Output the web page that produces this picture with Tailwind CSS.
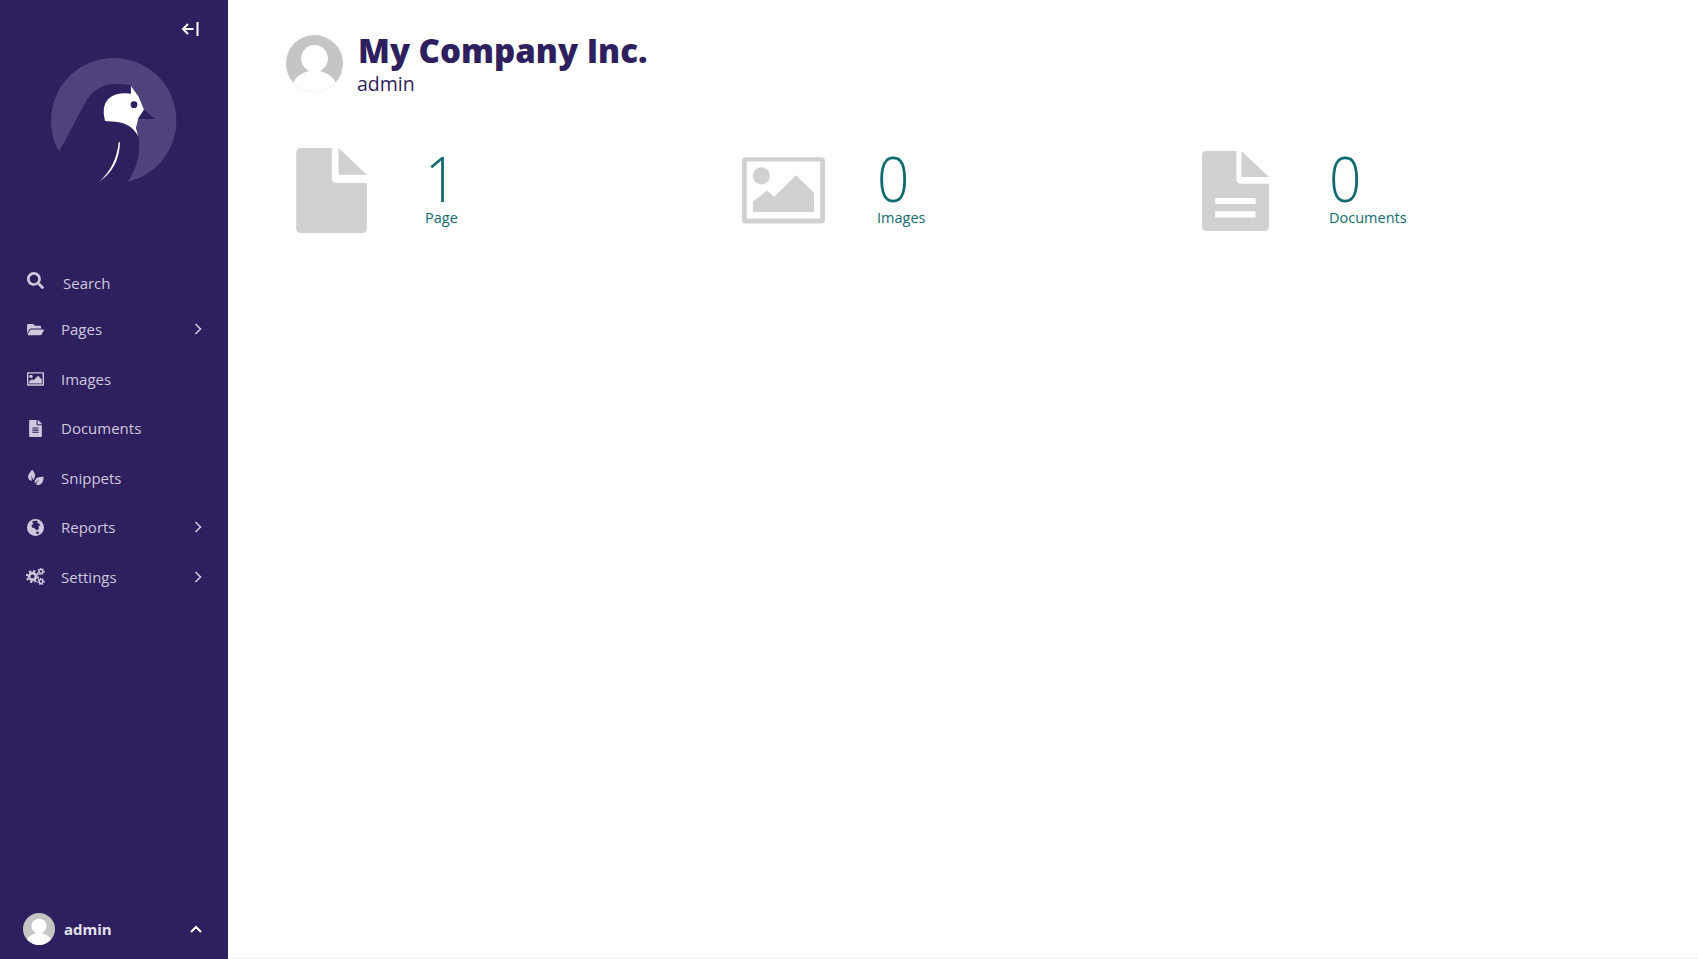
<!DOCTYPE html>
<html lang="en">
<head>
  <meta charset="UTF-8">
  <title>Dashboard</title>
  <script src="https://cdn.jsdelivr.net/npm/@tailwindcss/browser@4"></script>
</head>
<body class="bg-white font-['Open_Sans',sans-serif] h-[959px] overflow-hidden">
  <div class="flex h-[959px]">
    <!-- Sidebar -->
    <aside class="w-[228px] shrink-0 bg-[#2e1f5e] flex flex-col text-[#cdc8de]">
      <div class="flex justify-end pt-[21px] pr-[29px] h-[57px]">
        <svg class="w-[18px] h-[16px]" viewBox="0 0 18 16" fill="none" stroke="white" stroke-width="2"><path d="M16.5 1v14"/><path d="M12.5 8H2M7 3 2 8l5 5"/></svg>
      </div>
      <div class="pl-[50px]">
        <svg class="w-[128px] h-[128px]" viewBox="150 172 384 384">
          <circle cx="341" cy="363" r="188" fill="#50437d"/>
          <path d="M178 455 255 310Q285 255 345 252L390 255 395 300 415 410Q428 480 383 547L350 560H250L178 470Z" fill="#2e1f5e"/>
          <path d="M393 260 415 290 432 330 415 355 408 385 415 410Q392 368 345 366L315 364Q303 320 325 297 350 277 393 282Z" fill="#fff"/>
          <circle cx="402" cy="315" r="10" fill="#2e1f5e"/>
          <path d="M432 330 465 358H415Z" fill="#2e1f5e"/>
          <path d="M356 428 360 428Q358 505 298 546 349 500 356 428Z" fill="#fff"/>
        </svg>
      </div>
      <nav class="mt-[76.5px] flex flex-col">
        <a class="flex items-center h-[43px] pl-[27px] pr-[26px] text-[15px]">
          <svg class="w-[17px] h-[17px] -mt-[6px]" viewBox="0 0 512 512" fill="currentColor"><path d="M505 442.7L405.3 343c-4.5-4.5-10.6-7-17-7H372c27.6-35.3 44-79.7 44-128C416 93.1 322.9 0 208 0S0 93.1 0 208s93.1 208 208 208c48.3 0 92.7-16.4 128-44v16.3c0 6.4 2.5 12.5 7 17l99.7 99.7c9.4 9.4 24.6 9.4 33.9 0l28.3-28.3c9.4-9.4 9.4-24.6.1-34zM208 336c-70.7 0-128-57.2-128-128 0-70.7 57.2-128 128-128 70.7 0 128 57.2 128 128 0 70.7-57.2 128-128 128z"/></svg>
          <span class="ml-[19px]">Search</span>
        </a>
        <a class="flex items-center h-[49.5px] pl-[27px] pr-[26px] text-[15px]">
          <svg class="w-[17px] h-[15px]" viewBox="0 0 576 512" fill="currentColor"><path d="M572.694 292.093L500.27 416.248A63.997 63.997 0 0 1 444.989 448H45.025c-18.523 0-30.064-20.093-20.731-36.093l72.424-124.155A64 64 0 0 1 152 256h399.964c18.523 0 30.064 20.093 20.73 36.093zM152 224h328v-48c0-26.51-21.49-48-48-48H272l-64-64H48C21.49 64 0 85.49 0 112v278.046l69.077-118.418C86.214 242.25 117.989 224 152 224z"/></svg>
          <span class="ml-[17px]">Pages</span>
          <svg class="ml-auto w-[8px] h-[12px]" viewBox="0 0 8 12" fill="none" stroke="currentColor" stroke-width="1.6"><path d="M1.5 1l5 5-5 5"/></svg>
        </a>
        <a class="flex items-center h-[49.5px] pl-[27px] pr-[26px] text-[15px]">
          <svg class="w-[17px] h-[14px]" viewBox="38 55 244 196" fill="currentColor"><path fill-rule="evenodd" d="M48 55H272Q282 55 282 65V240Q282 250 272 250H48Q38 250 38 240V65Q38 55 48 55ZM58 75V230H262V75Z"/><circle cx="95" cy="115" r="24"/><path d="M70 216V185L112 153 132 172 197 108 250 160V216Z"/></svg>
          <span class="ml-[17px]">Images</span>
        </a>
        <a class="flex items-center h-[49.5px] pl-[27px] pr-[26px] text-[15px]">
          <svg class="w-[17px] h-[17px]" viewBox="0 0 384 512" fill="currentColor"><path d="M224 136V0H24C10.7 0 0 10.7 0 24v464c0 13.3 10.7 24 24 24h336c13.3 0 24-10.7 24-24V160H248c-13.2 0-24-10.8-24-24zm64 236c0 6.6-5.4 12-12 12H108c-6.6 0-12-5.4-12-12v-8c0-6.6 5.4-12 12-12h168c6.6 0 12 5.4 12 12v8zm0-64c0 6.6-5.4 12-12 12H108c-6.6 0-12-5.4-12-12v-8c0-6.6 5.4-12 12-12h168c6.6 0 12 5.4 12 12v8zm0-72v8c0 6.6-5.4 12-12 12H108c-6.6 0-12-5.4-12-12v-8c0-6.6 5.4-12 12-12h168c6.6 0 12 5.4 12 12zm96-114.1v6.1H256V0h6.1c6.4 0 12.5 2.5 17 7l97.9 98c4.5 4.5 7 10.6 7 16.9z"/></svg>
          <span class="ml-[17px]">Documents</span>
        </a>
        <a class="flex items-center h-[49.5px] pl-[27px] pr-[26px] text-[15px]">
          <svg class="w-[17px] h-[17px]" viewBox="0 0 17 16" fill="currentColor"><path d="M5 0C7.5 2.5 8.5 5 7.8 7.5 7.4 9 6.8 10 6 10.6 5.5 8.5 5 7 4.4 5.5 4.5 7.5 4.8 9.5 4.8 11.2 2.6 11.2.8 9.5 1 7 1.2 4.5 3.6 2.7 5 0Z"/><path d="M16.5 7C16.8 10.5 15.5 15 11.5 15.5 10.5 15.6 9.6 15.3 9 14.8 9.8 13 10.8 11.7 12.3 10.3 10.5 11.2 9 12.6 8 14 7 11.5 8.8 8.2 12 7.7 13.8 7.4 15.3 7.5 16.5 7Z"/></svg>
          <span class="ml-[17px]">Snippets</span>
        </a>
        <a class="flex items-center h-[49.5px] pl-[27px] pr-[26px] text-[15px]">
          <svg class="w-[17px] h-[17px]" viewBox="0 0 17 17"><circle cx="8.5" cy="8.5" r="8.5" fill="currentColor"/><path d="M5 2.5 8 1.7 11 2 10 4 12 4.5 13.5 6.5 11.5 7 12 9.5 9.5 11.5 7.5 9 5 8.5 4.5 6 6.5 5 5 2.5ZM9 13 11.5 12.5 12 14.5 9.5 15Z" fill="#2e1f5e"/></svg>
          <span class="ml-[17px]">Reports</span>
          <svg class="ml-auto w-[8px] h-[12px]" viewBox="0 0 8 12" fill="none" stroke="currentColor" stroke-width="1.6"><path d="M1.5 1l5 5-5 5"/></svg>
        </a>
        <a class="flex items-center h-[49.5px] pl-[26px] pr-[26px] text-[15px]">
          <svg class="w-[19px] h-[17px]" viewBox="0 0 19 17" fill="none" stroke="currentColor"><circle cx="6.5" cy="8.5" r="3.4" stroke-width="2.6"/><circle cx="6.5" cy="8.5" r="5.6" stroke-width="2" stroke-dasharray="2.2 2.2"/><circle cx="15" cy="3.5" r="1.9" stroke-width="1.5"/><circle cx="15" cy="3.5" r="3.1" stroke-width="1.2" stroke-dasharray="1.3 1.3"/><circle cx="15" cy="13.5" r="1.9" stroke-width="1.5"/><circle cx="15" cy="13.5" r="3.1" stroke-width="1.2" stroke-dasharray="1.3 1.3"/></svg>
          <span class="ml-[16px]">Settings</span>
          <svg class="ml-auto w-[8px] h-[12px]" viewBox="0 0 8 12" fill="none" stroke="currentColor" stroke-width="1.6"><path d="M1.5 1l5 5-5 5"/></svg>
        </a>
      </nav>
      <div class="mt-auto flex items-center h-[60px] pl-[23px] pr-[26px]">
        <svg class="w-[32px] h-[32px]" viewBox="0 0 170 170"><defs><clipPath id="av1"><circle cx="85" cy="85" r="85"/></clipPath></defs><circle cx="85" cy="85" r="85" fill="#c5c5c5"/><g clip-path="url(#av1)" fill="#fff"><circle cx="85" cy="70" r="40"/><ellipse cx="85" cy="162" rx="68" ry="56"/></g></svg>
        <span class="ml-[9px] text-[15px] font-bold text-[#e4e1ee]">admin</span>
        <svg class="ml-auto w-[12px] h-[8px]" viewBox="0 0 12 8" fill="none" stroke="white" stroke-width="2"><path d="M1 7l5-5 5 5"/></svg>
      </div>
    </aside>

    <!-- Main -->
    <main class="flex-1 border-b border-[#eeeeee] pl-[54px]">
      <header class="flex items-start pt-[35px] pl-[4px]">
        <svg class="w-[57px] h-[57px] shrink-0" viewBox="0 0 170 170"><defs><clipPath id="av2"><circle cx="85" cy="85" r="85"/></clipPath></defs><circle cx="85" cy="85" r="85" fill="#c5c5c5"/><g clip-path="url(#av2)" fill="#fff"><circle cx="85" cy="70" r="40"/><ellipse cx="85" cy="162" rx="68" ry="56"/></g></svg>
        <div class="ml-[15px] -mt-[3px]">
          <h1 class="text-[33px] leading-[38px] font-extrabold text-[#2e1f5e]">My Company Inc.</h1>
          <p class="text-[19.5px] leading-[24px] mt-[2px] -ml-px text-[#2e1f5e]">admin</p>
        </div>
      </header>
      <ul class="grid grid-cols-[repeat(3,452px)] mt-[52px]">
        <li class="flex items-center">
          <div class="w-[98px] flex justify-center">
            <svg class="w-[71px] h-[85px]" viewBox="0 0 212 255" fill="#d1d1d1"><path d="M14 0H107V90Q107 105 122 105H212V241Q212 255 198 255H14Q0 255 0 241V14Q0 0 14 0Z"/><path d="M127 0 212 80H127Z"/></svg>
          </div>
          <div class="ml-[45px] -mt-[6px] text-[#0f6b6f]">
            <div class="text-[63px] leading-[60px] font-light origin-left scale-x-[.9]">1</div>
            <div class="text-[14.5px] leading-[20px]">Page</div>
          </div>
        </li>
        <li class="flex items-center">
          <div class="w-[98px] flex justify-center">
            <svg class="w-[83px] h-[67px]" viewBox="38 55 244 196" fill="#d1d1d1"><path fill-rule="evenodd" d="M50 55H270Q282 55 282 67V238Q282 250 270 250H50Q38 250 38 238V67Q38 55 50 55ZM52 68V235H268V68Z"/><circle cx="95" cy="110" r="25"/><path d="M70 216V185L112 153 132 172 197 108 250 160V216Z"/></svg>
          </div>
          <div class="ml-[45px] -mt-[6px] text-[#0f6b6f]">
            <div class="text-[63px] leading-[60px] font-light origin-left scale-x-[.9]">0</div>
            <div class="text-[14.5px] leading-[20px]">Images</div>
          </div>
        </li>
        <li class="flex items-center">
          <div class="w-[98px] flex justify-center">
            <svg class="w-[67px] h-[80px]" viewBox="38 33 199 237" fill="#d1d1d1"><path fill-rule="evenodd" d="M52 33H140V115Q140 130 155 130H237V256Q237 270 223 270H52Q38 270 38 256V47Q38 33 52 33ZM77 172V190H197V172ZM77 212V230H197V212Z"/><path d="M155 33 237 110H155Z"/></svg>
          </div>
          <div class="ml-[45px] -mt-[6px] text-[#0f6b6f]">
            <div class="text-[63px] leading-[60px] font-light origin-left scale-x-[.9]">0</div>
            <div class="text-[14.5px] leading-[20px]">Documents</div>
          </div>
        </li>
      </ul>
    </main>
  </div>
</body>
</html>
